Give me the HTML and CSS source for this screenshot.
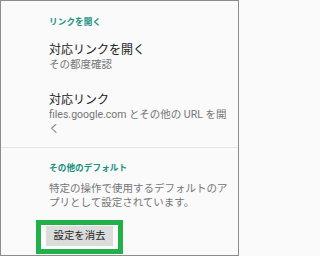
FILE: index.html
```html
<!DOCTYPE html>
<html lang="ja">
<head>
<meta charset="utf-8">
<link rel="stylesheet" href="styles.css">
</head>
<body>
<div class="page">
  <section class="group">
    <div class="cat">リンクを開く</div>
    <div class="item first">
      <div class="title">対応リンクを開く</div>
      <div class="sub">その都度確認</div>
    </div>
    <div class="item second">
      <div class="title">対応リンク</div>
      <div class="sub">files.google.com とその他の URL を開く</div>
    </div>
  </section>
  <hr class="sep">
  <section class="group">
    <div class="cat cat2">その他のデフォルト</div>
    <div class="sub body">特定の操作で使用するデフォルトのアプリとして設定されています。</div>
  </section>
  <div class="highlight">
    <button class="btn">設定を消去</button>
  </div>
</div>
</body>
</html>
```

FILE: styles.css
```css
html, body {
  margin: 0;
  padding: 0;
  background: #fafafa;
}
.page {
  width: 239px;
  height: 256px;
  box-sizing: border-box;
  border: 1px solid #8c8c8c;
  background: #fafafa;
  overflow: hidden;
  padding-top: 15px;
  font-family: Roboto, "Noto Sans CJK JP", sans-serif;
}
.group {
  padding-left: 48px;
  width: 182px;
}
.cat {
  font-size: 8.6px;
  line-height: 12px;
  font-weight: bold;
  color: #18917f;
  letter-spacing: 0.1px;
}
.item.first {
  margin-top: 14px;
}
.item.second {
  margin-top: 20px;
}
.title {
  font-size: 12px;
  line-height: 16px;
  color: #212121;
}
.sub {
  font-size: 10.5px;
  line-height: 14px;
  color: #757575;
}
.sep {
  margin: 11px 0 0 0;
  border: 0;
  height: 1px;
  background: #e4e4e4;
}
.cat2 {
  margin-top: 14px;
}
.body {
  margin-top: 8px;
}
.highlight {
  margin: 10px 0 0 35px;
  width: max-content;
  border: 5px solid #22b04b;
  padding: 1px 5px 3px 5px;
  display: flex;
}
.btn {
  width: 67px;
  height: 20px;
  border: 0;
  padding: 0;
  margin: 0;
  background: #dcdcdc;
  font-family: Roboto, "Noto Sans CJK JP", sans-serif;
  font-size: 10.4px;
  line-height: 20px;
  color: #262626;
}
```
